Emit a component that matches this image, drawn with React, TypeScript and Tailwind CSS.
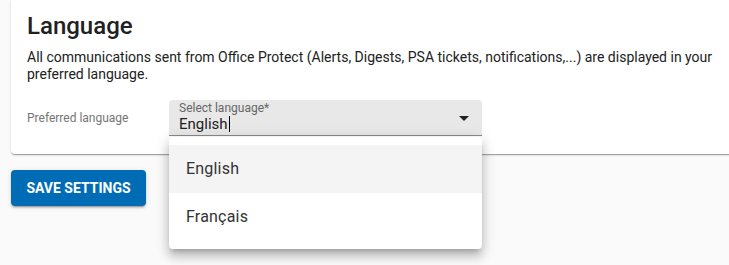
import React from "react";

export default function App() {
  return (
    <div
      className="relative h-[265px] w-[729px] overflow-hidden bg-[#fafafa]"
      style={{ fontFamily: "Roboto, 'Liberation Sans', sans-serif" }}
    >
      <div className="ml-[11px] w-[740px] rounded-b-[4px] bg-white pl-[16px] pt-[10px] pb-[18px] shadow-[0px_2px_1px_-1px_rgba(0,0,0,0.2),0px_1px_1px_0px_rgba(0,0,0,0.14),0px_1px_3px_0px_rgba(0,0,0,0.12)]">
        <h1 className="text-[24px] font-medium leading-8 text-[#212121]">Language</h1>
        <p className="mt-[7px] w-[700px] text-[14px] leading-[17px] text-[#212121]">
          All communications sent from Office Protect (Alerts, Digests, PSA tickets, notifications,...) are displayed in your preferred language.
        </p>
        <div className="mt-[17px] flex items-center">
          <div className="w-[142px] text-[12px] text-[#757575]">Preferred language</div>
          <div className="relative w-[313px]">
            <div className="flex h-[36px] items-stretch rounded-t-[4px] border-b border-[#8a8a8a] bg-[#e8e8e8]">
              <div className="flex flex-1 flex-col pl-[10px] pt-[1px]">
                <span className="text-[12px] leading-[14px] text-[#666666]">Select language*</span>
                <span className="flex items-center text-[15px] leading-[18px] text-[#212121]">
                  English
                  <span className="ml-[1px] inline-block h-[16px] w-[1px] bg-black" />
                </span>
              </div>
              <div className="flex items-center pr-[6px]">
                <svg width="24" height="24" viewBox="0 0 24 24" className="fill-[#222222]">
                  <path d="M7 10l5 5 5-5z" />
                </svg>
              </div>
            </div>
            <div className="absolute left-0 top-[37px] z-10 w-[313px] rounded-[4px] bg-white py-[8px] shadow-[0px_5px_5px_-3px_rgba(0,0,0,0.2),0px_8px_10px_1px_rgba(0,0,0,0.14),0px_3px_14px_2px_rgba(0,0,0,0.12)]">
              <div className="flex h-[48px] items-center bg-[#f4f4f4] pl-[17px] text-[16px] tracking-[0.2px] text-[#333333]">English</div>
              <div className="flex h-[48px] items-center pl-[17px] text-[16px] tracking-[0.2px] text-[#333333]">Français</div>
            </div>
          </div>
        </div>
      </div>
      <div className="ml-[11px] mt-[16px]">
        <button className="flex h-[36px] w-[135px] items-center justify-center rounded-[4px] bg-[#006cb6] text-[14px] font-bold uppercase text-white shadow-[0px_3px_1px_-2px_rgba(0,0,0,0.2),0px_2px_2px_0px_rgba(0,0,0,0.14),0px_1px_5px_0px_rgba(0,0,0,0.12)]">
          Save Settings
        </button>
      </div>
    </div>
  );
}
